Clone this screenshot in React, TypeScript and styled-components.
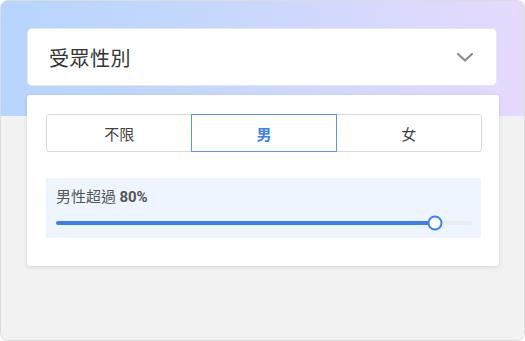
import React, { useState } from 'react';
import styled, { createGlobalStyle } from 'styled-components';

const GlobalStyle = createGlobalStyle`
  html, body {
    margin: 0;
    padding: 0;
    background: #ffffff;
  }
  * {
    box-sizing: border-box;
  }
`;

const options = ['不限', '男', '女'];

function App() {
  const [selected, setSelected] = useState(1);
  const percent = 80;
  const fill = 91;

  return (
    <>
      <GlobalStyle />
      <Frame>
        <Header>
          <Title>受眾性別</Title>
          <svg width="18" height="12" viewBox="0 0 18 12">
            <path d="M2 3 L9 9.5 L16 3" fill="none" stroke="#8a8d93" strokeWidth="2.2" strokeLinecap="round" />
          </svg>
        </Header>
        <Panel>
          <Segmented>
            {options.map((o, i) => (
              <Segment key={o} active={i === selected} onClick={() => setSelected(i)}>
                {o}
              </Segment>
            ))}
          </Segmented>
          <SliderBox>
            <Label>
              男性超過 <b>{percent}%</b>
            </Label>
            <Track>
              <Fill style={{ width: `${fill}%` }} />
              <Thumb style={{ left: `${fill}%` }} />
            </Track>
          </SliderBox>
        </Panel>
      </Frame>
    </>
  );
}

const Frame = styled.div`
  width: 525px;
  height: 341px;
  border: 1px solid #dcdcdc;
  border-radius: 8px;
  overflow: hidden;
  background: linear-gradient(90deg, #b6d5fd 0%, #c8d8fc 45%, #e6dafd 100%) top left / 100% 115px no-repeat, #f2f2f2;
  padding: 27px 25px 0 26px;
  display: flex;
  flex-direction: column;
  gap: 9px;
  font-family: 'Noto Sans CJK TC', 'Noto Sans', sans-serif;
`;

const Header = styled.div`
  height: 58px;
  background: #ffffff;
  border: 1px solid #e6e6ee;
  border-radius: 5px;
  margin-right: 2px;
  display: flex;
  align-items: center;
  justify-content: space-between;
  padding: 0 22px 0 21px;
`;

const Title = styled.div`
  font-size: 20px;
  color: #333333;
  letter-spacing: 0.5px;
`;

const Panel = styled.div`
  background: #ffffff;
  border-radius: 3px;
  box-shadow: 0 1px 4px rgba(0, 0, 0, 0.12);
  padding: 19px 17px 28px 19px;
  display: flex;
  flex-direction: column;
  gap: 26px;
`;

const Segmented = styled.div`
  display: grid;
  grid-template-columns: 1fr 1fr 1fr;
  height: 38px;
  border: 1px solid #d9d9d9;
  border-radius: 3px;
`;

const Segment = styled.div<{ active: boolean }>`
  display: flex;
  align-items: center;
  justify-content: center;
  font-size: 15px;
  color: ${(p) => (p.active ? '#3f7fe8' : '#444444')};
  font-weight: ${(p) => (p.active ? 700 : 400)};
  margin: -1px;
  border: 1px solid ${(p) => (p.active ? '#5b93f2' : 'transparent')};
  position: relative;
  cursor: pointer;
`;

const SliderBox = styled.div`
  background: #eef5fe;
  height: 60px;
  padding: 7px 9px 0 10px;
  margin-right: 1px;
`;

const Label = styled.div`
  font-size: 15px;
  color: #555555;
  line-height: 21px;
  b {
    font-family: 'Roboto', 'Noto Sans', sans-serif;
    font-weight: 700;
    color: #555555;
  }
`;

const Track = styled.div`
  position: relative;
  margin-top: 13px;
  height: 4px;
  border-radius: 2px;
  background: #e9ecf0;
`;

const Fill = styled.div`
  height: 100%;
  border-radius: 2px;
  background: #3b7ff0;
`;

const Thumb = styled.div`
  position: absolute;
  top: 50%;
  width: 15px;
  height: 15px;
  border-radius: 50%;
  background: #ffffff;
  border: 2.5px solid #3b7ff0;
  transform: translate(-50%, -50%);
`;

export default App;
